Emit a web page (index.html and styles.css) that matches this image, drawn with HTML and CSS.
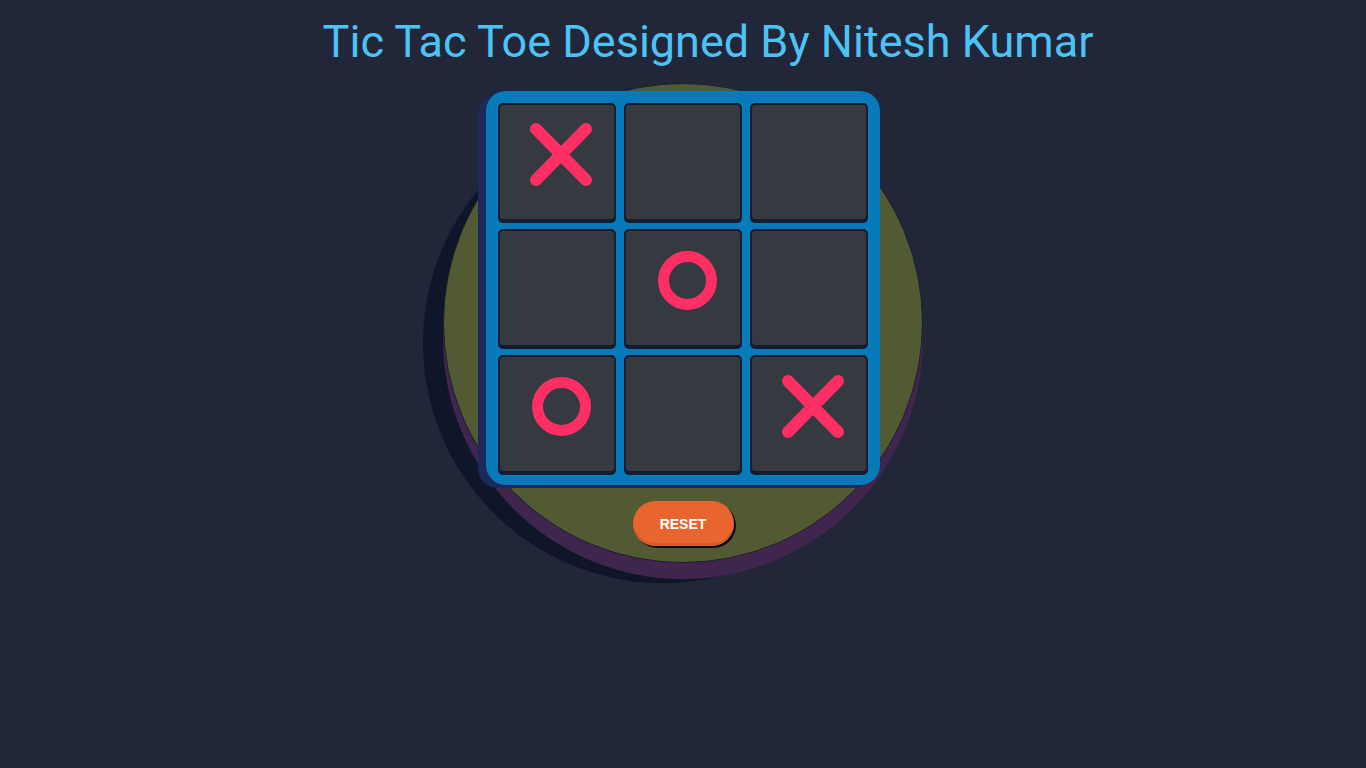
FILE: index.html
```html
<!DOCTYPE html>
<html>
<head>
<meta charset="utf-8">
<title>Tic Tac Toe</title>
<link rel="stylesheet" href="styles.css">
</head>
<body>
<h1 class="title">Tic Tac Toe Designed By Nitesh Kumar</h1>
<div class="stage">
  <div class="board">
    <div class="cell"><svg viewBox="0 0 114 114"><path class="mark" d="M36 24 L86 75 M86 24 L36 75"/></svg></div>
    <div class="cell"></div>
    <div class="cell"></div>
    <div class="cell"></div>
    <div class="cell"><svg viewBox="0 0 114 114"><circle class="mark" cx="61.5" cy="49.5" r="24"/></svg></div>
    <div class="cell"></div>
    <div class="cell"><svg viewBox="0 0 114 114"><circle class="mark" cx="61.5" cy="49.5" r="24"/></svg></div>
    <div class="cell"></div>
    <div class="cell"><svg viewBox="0 0 114 114"><path class="mark" d="M36 24 L86 75 M86 24 L36 75"/></svg></div>
  </div>
  <button class="reset">RESET</button>
</div>
</body>
</html>
```
FILE: styles.css
```css
html, body {
  margin: 0;
  padding: 0;
}
body {
  background: #212639;
  min-height: 768px;
  display: flex;
  flex-direction: column;
  align-items: center;
  font-family: Roboto, "Liberation Sans", sans-serif;
}
.title {
  margin: 15px 0 14px 50px;
  font-size: 45px;
  line-height: 54px;
  font-weight: 400;
  color: #4dc3f5;
  white-space: nowrap;
}
.stage {
  width: 480px;
  height: 480px;
  box-sizing: border-box;
  border-radius: 50%;
  background: #525a33;
  border: 1px solid #1a1f2c;
  box-shadow: 0 16px 0 #40254f, -20px 20px 0 #0f1629;
  display: flex;
  flex-direction: column;
  align-items: center;
  padding-top: 7px;
  gap: 16px;
}
.board {
  width: 394px;
  height: 394px;
  box-sizing: border-box;
  padding: 12px;
  background: #077ab9;
  border-radius: 20px;
  box-shadow: -8px 3px 0 #1b2a5b;
  display: grid;
  grid-template-columns: repeat(3, 118px);
  grid-template-rows: repeat(3, 118px);
  gap: 8px;
}
.cell {
  box-sizing: border-box;
  background: #343a40;
  border: 2px solid #171b2f;
  border-radius: 5px;
  box-shadow: 0 2px 0 #141a30;
}
.cell svg {
  display: block;
  width: 114px;
  height: 114px;
}
.mark {
  fill: none;
  stroke: #ff2e63;
  stroke-width: 12;
  stroke-linecap: round;
}
circle.mark {
  stroke-width: 11;
}
.reset {
  width: 101px;
  height: 45px;
  border: none;
  border-radius: 23px;
  background: #e9652f;
  box-shadow: inset 0 -3px 0 #d65a2a, 2px 2px 0 #0c0c10;
  color: #ffffff;
  font-family: "Liberation Sans", Arial, sans-serif;
  font-weight: 700;
  font-size: 14px;
  padding: 0;
  cursor: pointer;
}
```
